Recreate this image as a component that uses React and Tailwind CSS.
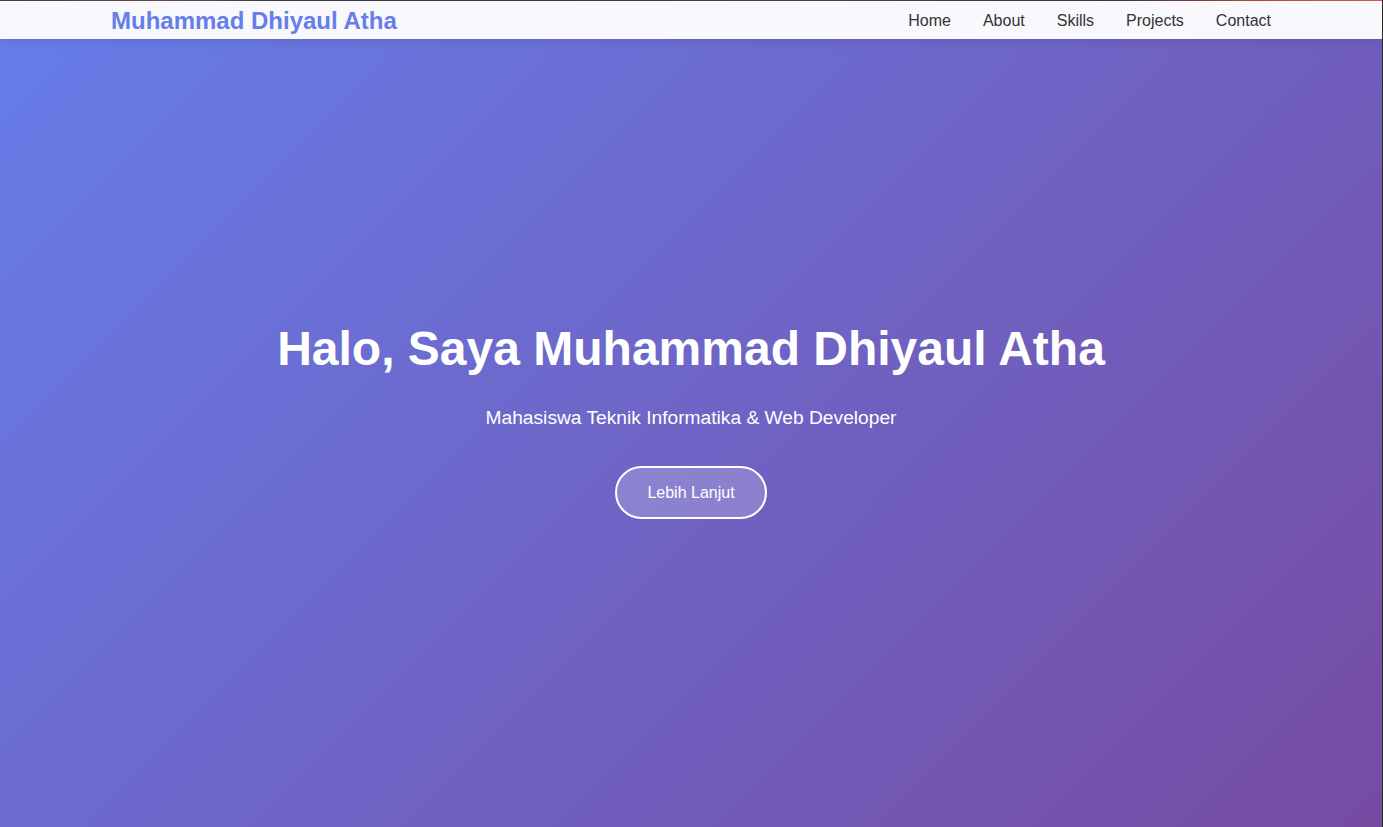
import React from 'react';

const links = ['Home', 'About', 'Skills', 'Projects', 'Contact'];

const App = () => {
  return (
    <div className="relative flex min-h-[827px] font-['Liberation_Sans',Arial,sans-serif]">
      <div className="relative flex-1">
        <div className="absolute left-0 right-0 top-0 z-20 h-px bg-[linear-gradient(90deg,#4a3a35_0%,#6b4a4a_12%,#3a3a3a_20%,#2e3a40_35%,#3a4a4a_60%,#2c3640_80%,#b84a3a_92%,#d0603a_100%)]" />

        {/* Navbar */}
        <nav className="absolute left-0 right-0 top-px z-10 h-[38px] bg-[#f8f8fd] shadow-[0_2px_10px_rgba(0,0,0,0.1)]">
          <div className="mx-auto flex h-full max-w-[1200px] items-center justify-between px-5 pt-px">
            <span className="text-[24px] font-bold text-[#667eea]">Muhammad Dhiyaul Atha</span>
            <ul className="flex gap-8 text-[16px] text-[#333]">
              {links.map(l => (
                <li key={l}><a href="#" className="hover:text-[#667eea]">{l}</a></li>
              ))}
            </ul>
          </div>
        </nav>

        {/* Hero */}
        <section className="flex h-[827px] items-center justify-center bg-[linear-gradient(135deg,#667eea_0%,#764ba2_100%)] text-center text-white">
          <div className="pt-[12px]">
            <h1 className="mb-[26px] text-[48px] font-bold leading-[1.2]">Halo, Saya Muhammad Dhiyaul Atha</h1>
            <p className="mb-8 text-[19.2px] leading-[1.6]">Mahasiswa Teknik Informatika &amp; Web Developer</p>
            <a href="#" className="inline-block rounded-full border-2 border-white bg-white/20 px-[30px] py-[15px] text-[16px] leading-[19px] text-white">
              Lebih Lanjut
            </a>
          </div>
        </section>
      </div>
      <div className="w-px bg-[#2a2a2a]" />
    </div>
  );
};

export default App;
